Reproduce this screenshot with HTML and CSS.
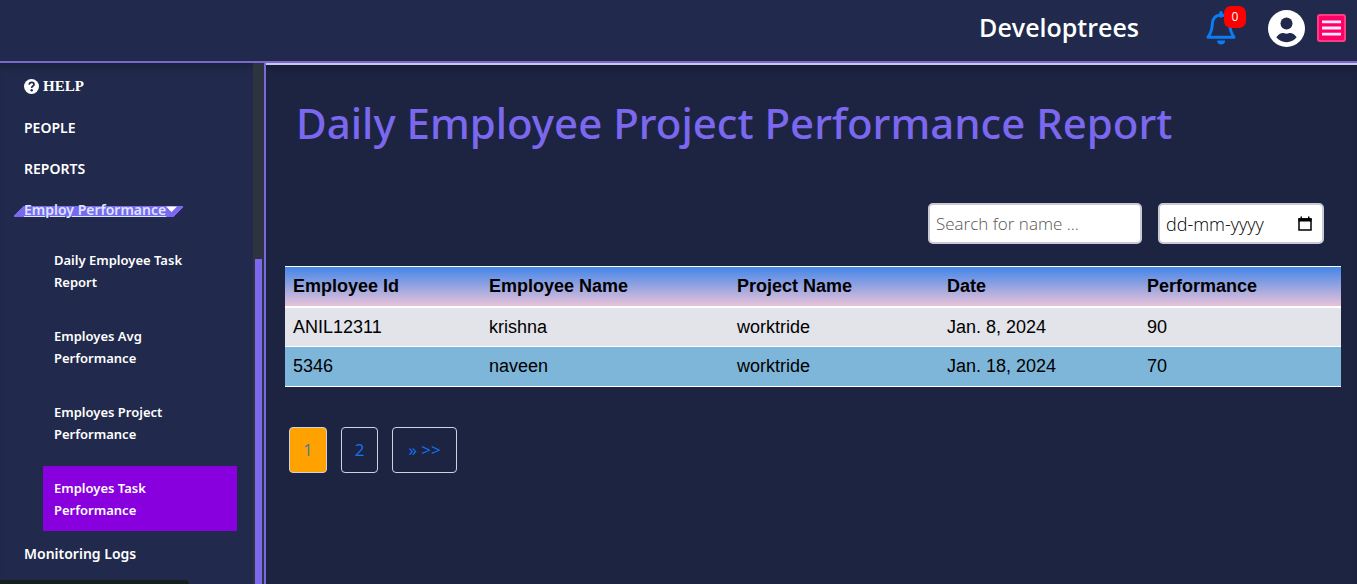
FILE: index.html
```html
<!DOCTYPE html>
<html lang="en">
<head>
<meta charset="utf-8">
<meta name="viewport" content="width=device-width, initial-scale=1">
<title>Daily Employee Project Performance Report</title>
<link rel="stylesheet" href="styles.css">
</head>
<body>
<header class="topbar">
  <div class="brand">Developtrees</div>
  <button class="bell" type="button" aria-label="Notifications">
    <svg width="30" height="34" viewBox="0 0 30 34" aria-hidden="true">
      <path d="M15 4C9.500 4 6.500 8 6.300 13C6.100 19 5 22 2 26.200H28C25 22 23.900 19 23.700 13C23.500 8 20.500 4 15 4Z" fill="none" stroke="#0a7cf5" stroke-width="3" stroke-linejoin="round"/>
      <path d="M15 1.800V5" stroke="#0a7cf5" stroke-width="3.400" stroke-linecap="round"/>
      <path d="M11 29.500H19.200C19 32 17.500 33.500 15.100 33.500C12.700 33.500 11.200 32 11 29.500Z" fill="#0a7cf5"/>
    </svg>
    <span class="badge">0</span>
  </button>
  <button class="avatar" type="button" aria-label="Account">
    <svg width="37" height="37" viewBox="0 0 37 37" aria-hidden="true">
      <circle cx="18.500" cy="18.500" r="18.500" fill="#fff"/>
      <circle cx="18.500" cy="13.400" r="6" fill="#212a4c"/>
      <path d="M8.300 27.300C10.200 24.500 12.800 23 14.800 23C16 23 16.500 23.700 18.500 23.700C20.500 23.700 21 23 22.200 23C24.200 23 26.800 24.500 28.700 27.300C26.400 30.400 22.800 32.200 18.500 32.200C14.200 32.200 10.600 30.400 8.300 27.300Z" fill="#212a4c"/>
    </svg>
  </button>
  <button class="menu" type="button" aria-label="Menu">
    <svg width="20" height="18" viewBox="0 0 20 18" aria-hidden="true">
      <path d="M0 2.500H20M0 9H20M0 15.500H20" stroke="#fbeaff" stroke-width="3"/>
    </svg>
  </button>
</header>
<div class="shell">
  <aside class="sidebar">
    <nav class="nav">
      <a class="nav-link help" href="#">
        <svg width="15" height="15" viewBox="0 0 15 15" aria-hidden="true">
          <circle cx="7.500" cy="7.500" r="7.500" fill="#fff"/>
          <path d="M5.100 5.600C5.400 4 6.300 3.300 7.600 3.300C9 3.300 10 4.200 10 5.400C10 7.100 7.700 7 7.700 8.900" fill="none" stroke="#212a4c" stroke-width="1.700"/>
          <circle cx="7.700" cy="11.200" r="1.200" fill="#212a4c"/>
        </svg>
        HELP
      </a>
      <a class="nav-link" href="#">PEOPLE</a>
      <a class="nav-link" href="#">REPORTS</a>
      <a class="nav-link current" href="#"><span class="current-label">Employ Performance<svg width="11" height="10" viewBox="0 0 11 10" aria-hidden="true"><path d="M0 1.500H11L5.500 7Z" fill="#fff"/></svg></span></a>
      <ul class="subnav">
        <li><a class="sub-link" href="#">Daily Employee Task Report</a></li>
        <li><a class="sub-link" href="#">Employes Avg Performance</a></li>
        <li><a class="sub-link" href="#">Employes Project Performance</a></li>
        <li><a class="sub-link active" href="#">Employes Task Performance</a></li>
      </ul>
      <a class="nav-link" href="#">Monitoring Logs</a>
    </nav>
    <div class="track"><div class="thumb"></div></div>
  </aside>
  <main class="content">
    <h1 class="title">Daily Employee Project Performance Report</h1>
    <form class="filters">
      <input class="field search" type="text" placeholder="Search for name ..." aria-label="Search for name">
      <div class="field date">
        <input class="date-input" type="text" placeholder="dd-mm-yyyy" aria-label="Date">
        <button class="date-button" type="button" aria-label="Pick a date">
          <svg width="14" height="16" viewBox="0 0 14 16" aria-hidden="true">
            <path d="M1 3H13V14H1Z" fill="none" stroke="#000" stroke-width="1.500"/>
            <path d="M.5 2.300H13.500V5.500H.5ZM2.500 .5H4V3H2.500ZM10 .5H11.500V3H10Z" fill="#000"/>
          </svg>
        </button>
      </div>
    </form>
    <table class="report">
      <colgroup><col class="c-id"><col class="c-name"><col class="c-project"><col class="c-date"><col></colgroup>
      <thead>
        <tr><th>Employee Id</th><th>Employee Name</th><th>Project Name</th><th>Date</th><th>Performance</th></tr>
      </thead>
      <tbody>
        <tr><td>ANIL12311</td><td>krishna</td><td>worktride</td><td>Jan. 8, 2024</td><td>90</td></tr>
        <tr><td>5346</td><td>naveen</td><td>worktride</td><td>Jan. 18, 2024</td><td>70</td></tr>
      </tbody>
    </table>
    <nav class="pager" aria-label="Pages">
      <a class="page selected" href="#">1</a>
      <a class="page" href="#">2</a>
      <a class="page next" href="#">» &gt;&gt;</a>
    </nav>
  </main>
</div>
<div class="status"></div>
</body>
</html>
```

FILE: styles.css
```css
* { box-sizing: border-box; }

body {
  margin: 0;
  height: 100vh;
  display: flex;
  flex-direction: column;
  overflow: hidden;
  background: #1c2442;
  color: #fff;
  font-family: "Open Sans", "Noto Sans", sans-serif;
  font-size: 14px;
}

a { color: inherit; text-decoration: none; }
svg { display: block; }
button { padding: 0; border: 0; background: none; cursor: pointer; font: inherit; }

.topbar {
  display: flex;
  flex: none;
  align-items: center;
  justify-content: flex-end;
  height: 63px;
  padding: 0 11px 5px 16px;
  background: #212a4c;
  border-bottom: 2px solid #7b68cf;
}

.brand {
  margin-right: 67px;
  padding-bottom: 3px;
  font-size: 25px;
  font-weight: 600;
  line-height: 36px;
}

.bell { position: relative; margin-right: 32px; }

.badge {
  position: absolute;
  top: -5px;
  right: -10px;
  width: 22px;
  height: 22px;
  border-radius: 7px;
  background: #f00;
  color: #fff;
  font-size: 12px;
  line-height: 22px;
  text-align: center;
}

.avatar { margin-right: 12px; }

.menu {
  padding: 3px;
  border: 2px solid #ff3d83;
  border-radius: 3px;
  background: #ff0066;
}

.menu svg { width: 19px; }

.shell { display: flex; flex: 1; min-height: 0; }

.sidebar {
  display: flex;
  flex: none;
  width: 266px;
  background: #212a4c;
  border-right: 2px solid #7b68dd;
  box-shadow: inset 0 7px 7px -4px #1a2038;
}

.nav {
  flex: 1;
  padding-top: 3px;
  font-family: "Noto Sans", "Open Sans", sans-serif;
}

.nav-link {
  display: flex;
  align-items: center;
  height: 41px;
  padding-left: 24px;
  font-weight: 600;
}

.help {
  gap: 4px;
  font-family: "Liberation Serif", serif;
  font-size: 15px;
  font-weight: 700;
}

.current-label {
  display: flex;
  align-items: center;
  height: 20px;
  margin-left: -10px;
  padding: 0 6px 0 10px;
  background: linear-gradient(135deg, transparent 7px, #7b68ee 7px calc(100% - 7px), transparent calc(100% - 7px)) 0 6px / 100% 11px no-repeat;
  color: #d9e6ff;
  text-decoration: underline;
}

.subnav {
  display: grid;
  gap: 11px;
  margin: 0;
  padding: 8px 16px 2px 43px;
  list-style: none;
}

.sub-link {
  display: block;
  padding: 11px 40px 10px 11px;
  font-size: 13px;
  font-weight: 600;
  line-height: 22px;
}

.active { background: #8800dd; }

.track {
  width: 11px;
  padding: 196px 2px 0;
  background: #2d343f;
}

.thumb { height: 100%; background: #7b68ee; }

.content {
  flex: 1;
  min-width: 0;
  padding: 25px 16px 0 19px;
  border-top: 2px solid #cbc8ea;
  box-shadow: inset 0 7px 7px -4px #171c32;
}

.title {
  margin: 0 0 47px;
  padding-left: 11px;
  color: #7b68ee;
  font-family: "Noto Sans", "Open Sans", sans-serif;
  font-size: 42px;
  font-weight: 500;
  line-height: 66px;
}

.filters {
  display: flex;
  justify-content: flex-end;
  gap: 16px;
  margin: 0 17px 22px 0;
}

.field {
  height: 41px;
  padding: 0 6px;
  border: 2px solid #c9cad6;
  border-radius: 5px;
  background: #fff;
  color: #000;
  font-family: inherit;
  font-size: 18px;
  font-weight: 300;
}

.search { width: 214px; font-size: 17px; }
.search::placeholder { color: #555; }

.date {
  display: flex;
  align-items: center;
  justify-content: space-between;
  width: 166px;
  padding-right: 10px;
}

.date-input {
  width: 120px;
  padding: 0;
  border: 0;
  background: none;
  font: inherit;
}

.date-input::placeholder { color: #000; }

.report {
  width: 100%;
  border-collapse: collapse;
  table-layout: fixed;
  border-top: 1px solid #fff;
  color: #000;
  font-family: "Liberation Sans", Arial, sans-serif;
  font-size: 18px;
  line-height: 23px;
}

.c-id { width: 18.560%; }
.c-name { width: 23.480%; }
.c-project { width: 19.890%; }
.c-date { width: 18.940%; }

.report th, .report td {
  padding: 8px;
  border-bottom: 1px solid #fff;
  text-align: left;
}

.report td { padding-bottom: 7px; }
.report tr:last-child td { padding-bottom: 8px; }
.report th { border-bottom-width: 2px; }
.report thead tr { background: linear-gradient(#4486e8, #f0c5d8); }
.report tbody tr { background: #e3e3ea; }
.report tbody tr:nth-child(even) { background: #7eb6d9; }

.pager {
  display: flex;
  gap: 14px;
  padding: 40px 4px 0;
}

.page {
  padding: 0 13px;
  border: 1px solid #d0d3dd;
  border-radius: 4px;
  color: #1473f5;
  font-size: 17px;
  line-height: 44px;
}

.next { padding: 0 15px; }

.selected { background: #ffa200; color: #4a7a9c; }

.status {
  position: fixed;
  bottom: 0;
  left: 0;
  width: 189px;
  height: 4px;
  border-radius: 0 4px 0 0;
  background: #14201f;
}
```
